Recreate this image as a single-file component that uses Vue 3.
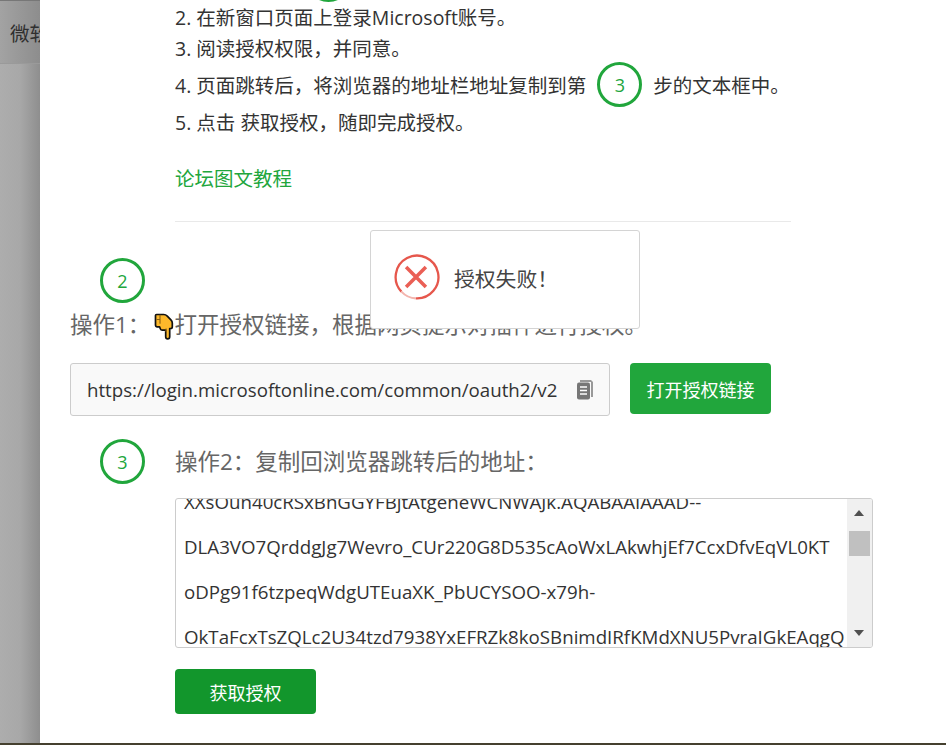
<template>
  <div class="page">
    <div class="backdrop">
      <div class="tab-bar"><span class="tab-text">微软</span></div>
    </div>
    <main class="panel">
      <div class="guide">
        <div class="top-step"><span class="step-badge">2</span></div>
        <ol class="steps">
          <li>2. 在新窗口页面上登录Microsoft账号。</li>
          <li>3. 阅读授权权限，并同意。</li>
          <li class="tall">4. 页面跳转后，将浏览器的地址栏地址复制到第<span class="step-badge inline">3</span>步的文本框中。</li>
          <li>5. 点击 获取授权，随即完成授权。</li>
        </ol>
        <a class="doc-link">论坛图文教程</a>
        <div class="divider"></div>
      </div>

      <section class="action-one">
        <span class="step-badge">2</span>
        <h3 class="action-title">
          操作1：<svg class="hand" viewBox="0 0 20 27">
            <path d="M2.500 1.500h7.200c1.400 0 2.600.6 3.600 1.600l3.600 3.700c.9.9 1.400 2 1.400 3.200v3.700c0 1-.8 1.800-1.700 1.800h-.9v8.200c0 1.200-.9 2.100-2 2.100s-2-.9-2-2.100v-6.500l-3.400-.1c-.9 0-1.700-.6-2-1.400l-.7-1.900H3.200c-1 0-1.700-.8-1.700-1.700V2.500c0-.6.400-1 1-1z" fill="#fdb92b" stroke="#111" stroke-width="1.700" stroke-linejoin="round" />
            <path d="M2.500 6.500h3.500M6 1.800v9M12.100 15.600v3.500" fill="none" stroke="#8a5f10" stroke-width="1.100" />
          </svg>打开授权链接，根据网页提示对插件进行授权。
        </h3>
        <div class="link-row">
          <div class="link-box">
            <span class="link-text">https://login.microsoftonline.com/common/oauth2/v2</span>
            <svg class="copy-icon" viewBox="0 0 20 22">
              <path d="M5 1h11l2 2v15h-2V3H5z" fill="#999" />
              <rect x="2" y="3.500" width="13" height="17" rx="2" fill="#777" />
              <path d="M5 8h7M5 11.500h7M5 15h7" stroke="#fff" stroke-width="1.500" />
            </svg>
          </div>
          <button class="btn open-btn">打开授权链接</button>
        </div>
      </section>

      <section class="action-two">
        <div class="action-two-head">
          <span class="step-badge">3</span>
          <h3 class="action-title second">操作2：复制回浏览器跳转后的地址：</h3>
        </div>
        <div class="url-box">
          <div class="url-lines">
            <p v-for="line in urlLines" :key="line">{{ line }}</p>
          </div>
          <div class="scrollbar">
            <span class="arrow up"></span>
            <span class="thumb"></span>
            <span class="arrow down"></span>
          </div>
        </div>
        <button class="btn get-btn">获取授权</button>
      </section>
    </main>

    <div class="toast">
      <svg class="toast-icon" viewBox="0 0 46 46">
        <path d="M9 37A20.500 20.500 0 1 1 23 43.500" fill="none" stroke="#e6574c" stroke-width="2.200" />
        <path d="M9 37A20.500 20.500 0 0 0 23 43.500" fill="none" stroke="#f3b5ae" stroke-width="2" />
        <path d="M13.500 13.500l19 19M32.500 13.500l-19 19" stroke="#ea5f55" stroke-width="3.400" />
      </svg>
      <span class="toast-text">授权失败！</span>
    </div>
  </div>
</template>

<script setup>
const urlLines = [
  'XXsOun40cRSxBnGGYFBjtAtgeneWCNWAJk.AQABAAIAAAD--',
  'DLA3VO7QrddgJg7Wevro_CUr220G8D535cAoWxLAkwhjEf7CcxDfvEqVL0KT',
  'oDPg91f6tzpeqWdgUTEuaXK_PbUCYSOO-x79h-',
  'OkTaFcxTsZQLc2U34tzd7938YxEFRZk8koSBnimdIRfKMdXNU5PvraIGkEAqgQ'
]
</script>

<style>
html,
body {
  margin: 0;
  height: 100%;
  overflow: hidden;
}
</style>

<style scoped>
.page {
  position: relative;
  display: flex;
  width: 946px;
  height: 745px;
  overflow: hidden;
  font-family: "Open Sans", "Noto Sans CJK SC", sans-serif;
  color: #333;
  border-bottom: 2px solid #45402f;
  box-sizing: border-box;
}

.backdrop {
  width: 40px;
  flex-shrink: 0;
  background: linear-gradient(to right, #adadad 0, #a8a8a8 50%, #8e8e8e 100%);
  border-top: 1px solid #777;
  box-sizing: border-box;
}

.tab-bar {
  height: 63px;
  padding-left: 10px;
  display: flex;
  align-items: center;
  overflow: hidden;
  white-space: nowrap;
  border-bottom: 1px solid #9a9a9a;
  background: linear-gradient(to right, #a3a3a3, #8d8d8d);
  box-sizing: border-box;
}

.tab-text {
  font-size: 19.500px;
  color: #2f2f2f;
}

.panel {
  flex: 1;
  background: #fff;
  overflow: hidden;
}

.guide {
  width: 616px;
  margin-left: 135px;
}

.top-step {
  height: 2px;
  display: flex;
  align-items: flex-end;
  padding-left: 131px;
}

.steps {
  list-style: none;
  margin: 0;
  padding: 0;
  font-size: 19.500px;
}

.steps li {
  display: flex;
  align-items: center;
  height: 31px;
  white-space: pre;
}

.steps li:first-child {
  margin-top: -1px;
}

.steps li.tall {
  height: 43px;
}

.doc-link {
  display: block;
  margin-top: 28px;
  font-size: 19.500px;
  line-height: 28px;
  color: #21a63c;
}

.divider {
  margin-top: 28px;
  border-top: 1px solid #e9e9e9;
}

.step-badge {
  display: flex;
  align-items: center;
  justify-content: center;
  flex-shrink: 0;
  width: 45px;
  height: 45px;
  border: 3px solid #21a63c;
  border-radius: 50%;
  box-sizing: border-box;
  font-size: 18px;
  color: #21a63c;
}

.step-badge.inline {
  margin: 0 11px;
}

.action-one {
  margin-top: 36px;
  padding-left: 30px;
}

.action-one > .step-badge {
  margin-left: 30px;
}

.action-title {
  margin: 0;
  font-size: 22.500px;
  font-weight: 400;
  line-height: 30px;
  color: #666;
  white-space: nowrap;
}

.action-one .action-title {
  margin-top: 7px;
}

.hand {
  width: 20px;
  height: 27px;
  vertical-align: -7px;
  margin: 0 0 0 4px;
}

.link-row {
  display: flex;
  gap: 20px;
  margin-top: 23px;
}

.link-box {
  display: flex;
  align-items: center;
  justify-content: space-between;
  width: 540px;
  height: 53px;
  padding: 0 14px 0 16px;
  background: #f9f9f9;
  border: 1px solid #ccc;
  border-radius: 3px;
  box-sizing: border-box;
}

.link-text {
  font-size: 18.700px;
  color: #333;
}

.copy-icon {
  width: 20px;
  height: 22px;
}

.btn {
  border: 0;
  border-radius: 4px;
  font-family: inherit;
  font-size: 18px;
  font-weight: 400;
  color: #fff;
  padding: 0;
}

.open-btn {
  width: 141px;
  height: 51px;
  background: #21a63c;
}

.action-two {
  margin-top: 23px;
  padding-left: 60px;
}

.action-two-head {
  display: flex;
  align-items: center;
  gap: 30px;
}

.url-box {
  display: flex;
  width: 698px;
  height: 150px;
  margin: 14px 0 0 75px;
  border: 1px solid #ccc;
  border-radius: 3px;
  box-sizing: border-box;
  overflow: hidden;
}

.url-lines {
  flex: 1;
  min-width: 0;
  margin-top: -20px;
  padding-left: 8px;
  font-size: 18.700px;
  line-height: 45px;
  color: #333;
  white-space: nowrap;
  overflow: hidden;
}

.url-lines p {
  margin: 0;
}

.scrollbar {
  position: relative;
  width: 25px;
  background: #f0f0f0;
  flex-shrink: 0;
}

.thumb {
  position: absolute;
  top: 32px;
  left: 2px;
  width: 21px;
  height: 25px;
  background: #c0c0c0;
}

.arrow {
  position: absolute;
  left: 7px;
  border-left: 5px solid transparent;
  border-right: 5px solid transparent;
}

.arrow.up {
  top: 11px;
  border-bottom: 6px solid #505050;
}

.arrow.down {
  bottom: 11px;
  border-top: 6px solid #505050;
}

.get-btn {
  display: block;
  width: 141px;
  height: 45px;
  margin: 21px 0 0 75px;
  background: #12962c;
}

.toast {
  position: absolute;
  left: 370px;
  top: 230px;
  display: flex;
  align-items: center;
  gap: 14px;
  width: 270px;
  height: 99px;
  padding: 0 0 0 21px;
  background: #fff;
  border: 1px solid #d4d4d4;
  border-radius: 3px;
  box-sizing: border-box;
}

.toast-icon {
  width: 48px;
  height: 48px;
  margin-bottom: 5px;
}

.toast-text {
  font-size: 20.800px;
  color: #444;
  margin-bottom: 3px;
}
</style>
